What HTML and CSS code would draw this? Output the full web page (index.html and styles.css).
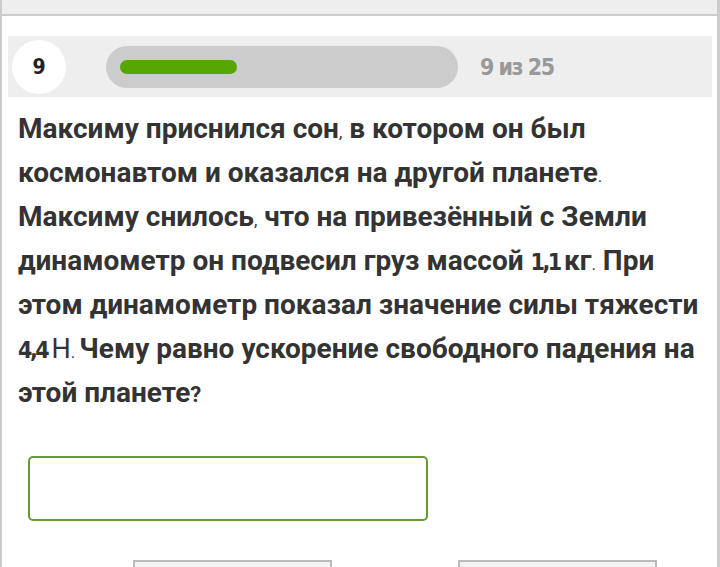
FILE: index.html
```html
<!DOCTYPE html>
<html lang="ru">
<head>
<meta charset="utf-8">
<title>Задание 9</title>
<link rel="stylesheet" href="styles.css">
</head>
<body>
<div class="page">
  <div class="topbar"></div>
  <div class="progress">
    <div class="num">9</div>
    <div class="track"><div class="fill" style="width:117px"></div></div>
    <div class="count">9 из 25</div>
  </div>
  <p class="question">Максиму приснился сон<span class="s">,</span> в котором он был космонавтом и оказался на другой планете<span class="s">.</span> Максиму снилось<span class="s">,</span> что на привезённый с Земли динамометр он подвесил груз массой <span class="d">1,1</span><span class="s"> </span>кг<span class="s">.</span> При этом динамометр показал значение силы тяжести <span class="d">4,4</span><span class="s"> </span><span class="n">Н</span><span class="s">. </span>Чему равно ускорение свободного падения на этой планете<span class="q">?</span></p>
  <div class="answer"></div>
  <div class="buttons">
    <div class="btn"></div>
    <div class="btn"></div>
  </div>
</div>
</body>
</html>
```

FILE: styles.css
```css
html, body {
  margin: 0;
  padding: 0;
  background: #fff;
}

.page {
  width: 720px;
  height: 567px;
  box-sizing: border-box;
  border-left: 2px solid #cccccc;
  border-right: 3px solid #cccccc;
  overflow: hidden;
  font-family: Roboto, "Liberation Sans", sans-serif;
}

.topbar {
  height: 14px;
  background: #eeeeee;
  border-bottom: 2px solid #cccccc;
}

.progress {
  margin: 20px 0 0 6px;
  width: 704px;
  height: 61px;
  background: #eeeeee;
  display: flex;
  align-items: center;
}

.num {
  width: 54px;
  height: 54px;
  margin-left: 4px;
  border-radius: 50%;
  background: #fff;
  display: flex;
  align-items: center;
  justify-content: center;
  font-family: "DejaVu Sans Condensed", "DejaVu Sans", sans-serif;
  font-weight: bold;
  font-size: 21px;
  color: #222;
}

.track {
  margin-left: 40px;
  width: 352px;
  height: 42px;
  border-radius: 21px;
  background: #cccccc;
  display: flex;
  align-items: center;
  padding-left: 14px;
  box-sizing: border-box;
}

.fill {
  height: 14px;
  border-radius: 7px;
  background: #56a600;
}

.count {
  margin-left: 22px;
  font-family: "DejaVu Sans Condensed", "DejaVu Sans", sans-serif;
  font-weight: bold;
  font-size: 23px;
  letter-spacing: -1.5px;
  color: #999999;
}

.question {
  margin: 10px 0 0 16px;
  width: 690px;
  font-size: 28px;
  line-height: 44px;
  font-weight: bold;
  color: #333333;
}

.question span {
  line-height: 1;
}

.question .s {
  font-size: 17px;
  font-weight: normal;
}

.question .q {
  font-size: 22px;
}

.question .d {
  font-family: "DejaVu Sans Condensed", "DejaVu Sans", sans-serif;
  font-size: 23px;
  letter-spacing: -2.5px;
}

.question .n {
  font-weight: normal;
  font-size: 27px;
}

.answer {
  margin: 41px 0 0 26px;
  width: 400px;
  height: 65px;
  box-sizing: border-box;
  border: 2px solid #6a9a35;
  border-radius: 5px;
}

.buttons {
  margin: 39px 0 0 131px;
  display: flex;
  gap: 126px;
}

.btn {
  width: 199px;
  height: 30px;
  box-sizing: border-box;
  border: 2px solid #bbbbbb;
  background: #f3f3f3;
}
```
